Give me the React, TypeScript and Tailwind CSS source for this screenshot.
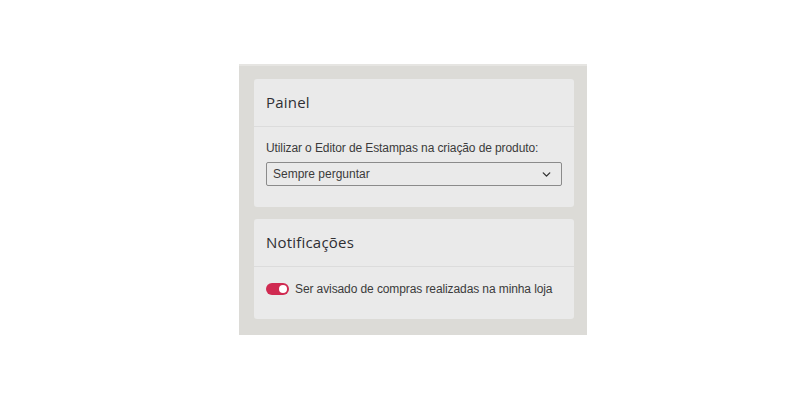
import { ChevronDown } from "lucide-react"

function Card({ title, children }: { title: string; children: React.ReactNode }) {
    return (
        <div className="bg-[#eaeaea] rounded-[3px]">
            <div className="h-[48px] flex items-center px-[12px] border-b border-[#dcdcdc]">
                <h2 className="text-[15px] text-[#2f2f33] tracking-[0.2px] font-['Open_Sans',sans-serif]">{title}</h2>
            </div>
            {children}
        </div>
    )
}

export default function App() {
    return (
        <div className="w-[800px] h-[412px] bg-white flex justify-center pl-[26px] font-['Liberation_Sans',Arial,sans-serif]">
            <div className="w-[348px] h-[271px] mt-[64px] bg-[#dcdbd7] border-t-2 border-[#e6e5e2] pl-[15px] pr-[13px] pt-[13px] flex flex-col gap-[12px]">
                <Card title="Painel">
                    <div className="px-[12px] pt-[14px] pb-[21px]">
                        <p className="text-[12px] text-[#3b3b3b] leading-[14px] tracking-[-0.1px]">
                            Utilizar o Editor de Estampas na criação de produto:
                        </p>
                        <div className="mt-[7px] h-[24px] border border-[#8b8b8b] rounded-[2px] flex items-center justify-between pl-[6px] pr-[8px]">
                            <span className="text-[12px] text-[#3b3b3b]">Sempre perguntar</span>
                            <ChevronDown className="w-[13px] h-[13px] text-[#333]" strokeWidth={2.5} />
                        </div>
                    </div>
                </Card>
                <Card title="Notificações">
                    <div className="px-[12px] pt-[15px] pb-[23px] flex items-center gap-[6px]">
                        <div className="w-[23px] h-[12px] rounded-full bg-[#d02a51] flex items-center justify-end pr-[2px]">
                            <div className="w-[8px] h-[8px] rounded-full bg-white" />
                        </div>
                        <span className="text-[12px] text-[#3b3b3b] leading-[14px] tracking-[-0.1px]">
                            Ser avisado de compras realizadas na minha loja
                        </span>
                    </div>
                </Card>
            </div>
        </div>
    )
}
